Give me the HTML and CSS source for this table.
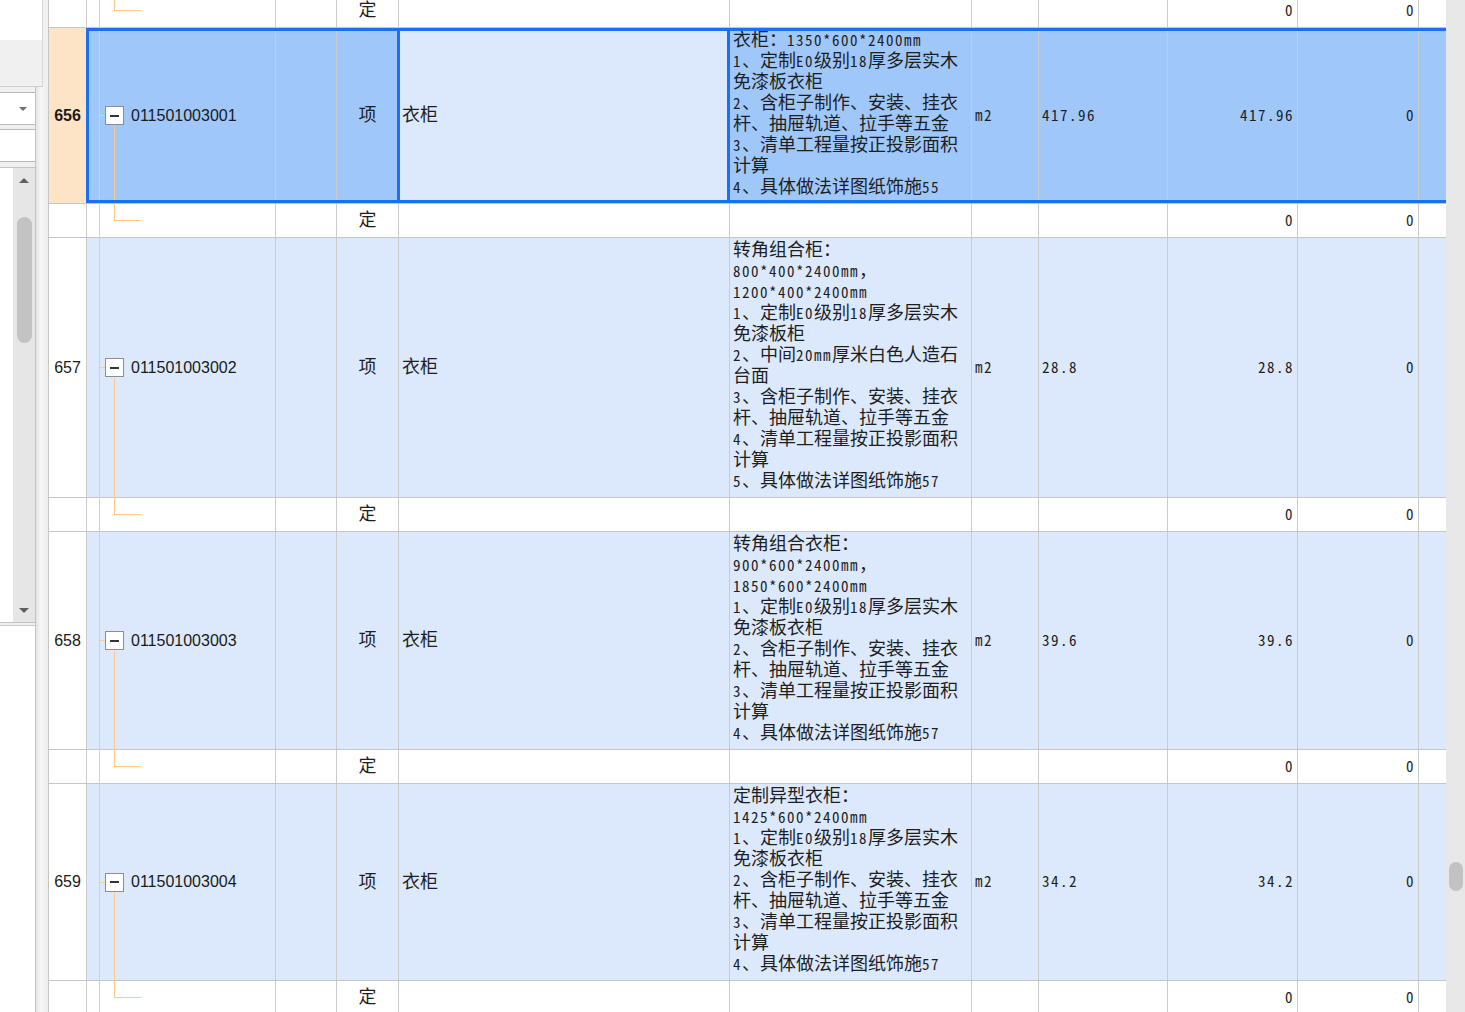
FILE: index.html
```html
<!DOCTYPE html>
<html lang="zh-CN">
<head>
<meta charset="utf-8">
<title>清单</title>
<link rel="stylesheet" href="styles.css">
</head>
<body>
<div class="app">
  <aside class="side">
    <div class="side-head"><div class="side-white"></div></div>
    <div class="side-main">
      <div class="panel">
        <div class="select"><span class="caret"></span></div>
        <div class="input"></div>
        <div class="list">
          <div class="sb">
            <span class="arr up"></span>
            <span class="sthumb"></span>
            <span class="sb-fill"></span>
            <span class="arr down"></span>
          </div>
        </div>
        <div class="rest"></div>
      </div>
      <div class="splitter"></div>
    </div>
  </aside>

  <main class="gridwrap">
    <div class="grid">
      <div class="row d">
        <div class="c num"></div><div class="c code"></div><div class="c"></div><div class="c typ">定</div><div class="c name"></div><div class="c desc"></div><div class="c unit"></div><div class="c qty"></div><div class="c r">0</div><div class="c r">0</div><div class="c"></div>
      </div>

      <div class="row m sel">
        <div class="c num">656</div>
        <div class="c code"><span class="tb"></span>011501003001</div>
        <div class="c"></div>
        <div class="c typ">项</div>
        <div class="c name">衣柜</div>
        <div class="c desc">
          <div>衣柜：<span class="a">1350*600*2400mm</span></div>
          <div><span class="a">1</span>、定制<span class="a">E0</span>级别<span class="a">18</span>厚多层实木</div>
          <div>免漆板衣柜</div>
          <div><span class="a">2</span>、含柜子制作、安装、挂衣</div>
          <div>杆、抽屉轨道、拉手等五金</div>
          <div><span class="a">3</span>、清单工程量按正投影面积</div>
          <div>计算</div>
          <div><span class="a">4</span>、具体做法详图纸饰施<span class="a">55</span></div>
        </div>
        <div class="c unit">m2</div>
        <div class="c qty">417.96</div>
        <div class="c r">417.96</div>
        <div class="c r">0</div>
        <div class="c"></div>
      </div>

      <div class="row d">
        <div class="c num"></div><div class="c code"></div><div class="c"></div><div class="c typ">定</div><div class="c name"></div><div class="c desc"></div><div class="c unit"></div><div class="c qty"></div><div class="c r">0</div><div class="c r">0</div><div class="c"></div>
      </div>

      <div class="row m">
        <div class="c num">657</div>
        <div class="c code"><span class="tb"></span>011501003002</div>
        <div class="c"></div>
        <div class="c typ">项</div>
        <div class="c name">衣柜</div>
        <div class="c desc">
          <div>转角组合柜：</div>
          <div><span class="a">800*400*2400mm</span>，</div>
          <div><span class="a">1200*400*2400mm</span></div>
          <div><span class="a">1</span>、定制<span class="a">E0</span>级别<span class="a">18</span>厚多层实木</div>
          <div>免漆板柜</div>
          <div><span class="a">2</span>、中间<span class="a">20mm</span>厚米白色人造石</div>
          <div>台面</div>
          <div><span class="a">3</span>、含柜子制作、安装、挂衣</div>
          <div>杆、抽屉轨道、拉手等五金</div>
          <div><span class="a">4</span>、清单工程量按正投影面积</div>
          <div>计算</div>
          <div><span class="a">5</span>、具体做法详图纸饰施<span class="a">57</span></div>
        </div>
        <div class="c unit">m2</div>
        <div class="c qty">28.8</div>
        <div class="c r">28.8</div>
        <div class="c r">0</div>
        <div class="c"></div>
      </div>

      <div class="row d">
        <div class="c num"></div><div class="c code"></div><div class="c"></div><div class="c typ">定</div><div class="c name"></div><div class="c desc"></div><div class="c unit"></div><div class="c qty"></div><div class="c r">0</div><div class="c r">0</div><div class="c"></div>
      </div>

      <div class="row m">
        <div class="c num">658</div>
        <div class="c code"><span class="tb"></span>011501003003</div>
        <div class="c"></div>
        <div class="c typ">项</div>
        <div class="c name">衣柜</div>
        <div class="c desc">
          <div>转角组合衣柜：</div>
          <div><span class="a">900*600*2400mm</span>，</div>
          <div><span class="a">1850*600*2400mm</span></div>
          <div><span class="a">1</span>、定制<span class="a">E0</span>级别<span class="a">18</span>厚多层实木</div>
          <div>免漆板衣柜</div>
          <div><span class="a">2</span>、含柜子制作、安装、挂衣</div>
          <div>杆、抽屉轨道、拉手等五金</div>
          <div><span class="a">3</span>、清单工程量按正投影面积</div>
          <div>计算</div>
          <div><span class="a">4</span>、具体做法详图纸饰施<span class="a">57</span></div>
        </div>
        <div class="c unit">m2</div>
        <div class="c qty">39.6</div>
        <div class="c r">39.6</div>
        <div class="c r">0</div>
        <div class="c"></div>
      </div>

      <div class="row d">
        <div class="c num"></div><div class="c code"></div><div class="c"></div><div class="c typ">定</div><div class="c name"></div><div class="c desc"></div><div class="c unit"></div><div class="c qty"></div><div class="c r">0</div><div class="c r">0</div><div class="c"></div>
      </div>

      <div class="row m">
        <div class="c num">659</div>
        <div class="c code"><span class="tb"></span>011501003004</div>
        <div class="c"></div>
        <div class="c typ">项</div>
        <div class="c name">衣柜</div>
        <div class="c desc">
          <div>定制异型衣柜：</div>
          <div><span class="a">1425*600*2400mm</span></div>
          <div><span class="a">1</span>、定制<span class="a">E0</span>级别<span class="a">18</span>厚多层实木</div>
          <div>免漆板衣柜</div>
          <div><span class="a">2</span>、含柜子制作、安装、挂衣</div>
          <div>杆、抽屉轨道、拉手等五金</div>
          <div><span class="a">3</span>、清单工程量按正投影面积</div>
          <div>计算</div>
          <div><span class="a">4</span>、具体做法详图纸饰施<span class="a">57</span></div>
        </div>
        <div class="c unit">m2</div>
        <div class="c qty">34.2</div>
        <div class="c r">34.2</div>
        <div class="c r">0</div>
        <div class="c"></div>
      </div>

      <div class="row d">
        <div class="c num"></div><div class="c code"></div><div class="c"></div><div class="c typ">定</div><div class="c name"></div><div class="c desc"></div><div class="c unit"></div><div class="c qty"></div><div class="c r">0</div><div class="c r">0</div><div class="c"></div>
      </div>
    </div>
  </main>

  <div class="vbar"><div class="vthumb"></div></div>
</div>
</body>
</html>
```

FILE: styles.css
```css
* { box-sizing: border-box; }

html, body {
  margin: 0;
  height: 100%;
}

body {
  font-family: "Noto Sans CJK SC", sans-serif;
  color: #1e1e1e;
  background: #f0f0f0;
  overflow: hidden;
}

.app {
  display: flex;
  width: 1465px;
  height: 1012px;
}

/* ---------- left side panel ---------- */
.side {
  width: 48px;
  flex: none;
  display: flex;
  flex-direction: column;
  background: #f0f0f0;
}

.side-head {
  width: 43px;
  height: 87px;
  flex: none;
  border-right: 1px solid #d9d9d9;
  border-bottom: 1px solid #cfcfcf;
}

.side-white {
  height: 40px;
  background: #fff;
}

.side-main {
  flex: 1;
  display: flex;
  min-height: 0;
}

.panel {
  width: 36px;
  flex: none;
  display: flex;
  flex-direction: column;
  padding-top: 5px;
  border-right: 1px solid #c4c4c4;
}

.select {
  height: 33px;
  flex: none;
  background: #fff;
  border-top: 1px solid #b8b8b8;
  border-bottom: 1px solid #b8b8b8;
  display: flex;
  align-items: center;
  justify-content: flex-end;
  padding-right: 8px;
}

.caret {
  width: 0;
  height: 0;
  border-left: 4px solid transparent;
  border-right: 4px solid transparent;
  border-top: 4px solid #6e6e6e;
}

.input {
  height: 33px;
  flex: none;
  margin-top: 4px;
  background: #fff;
  border-top: 1px solid #b8b8b8;
  border-bottom: 1px solid #b8b8b8;
}

.list {
  height: 456px;
  flex: none;
  margin-top: 5px;
  background: #fff;
  border-top: 1px solid #c4c4c4;
  border-bottom: 1px solid #c4c4c4;
  display: flex;
  justify-content: flex-end;
}

.sb {
  width: 22px;
  background: #e6e6e6;
  display: flex;
  flex-direction: column;
  align-items: center;
  padding: 10px 0 9px;
}

.arr {
  width: 0;
  height: 0;
  border-left: 5px solid transparent;
  border-right: 5px solid transparent;
}

.arr.up { border-bottom: 5px solid #5f5f5f; }
.arr.down { border-top: 5px solid #5f5f5f; }

.sthumb {
  width: 15px;
  height: 126px;
  margin-top: 34px;
  border-radius: 8px;
  background: #c3c3c3;
}

.sb-fill { flex: 1; }

.rest {
  flex: 1;
  margin-top: 2px;
  background: #fff;
  border-top: 1px solid #cbcbcb;
}

.splitter {
  width: 12px;
  flex: none;
  background: linear-gradient(to right, #e3e3e3, #f7f7f7 40%, #ececec);
}

/* ---------- grid ---------- */
.gridwrap {
  width: 1398px;
  flex: none;
  height: 1012px;
  overflow: hidden;
  background: #fff;
  border-left: 1px solid #c6c6c6;
}

.grid {
  margin-top: -6px;
}

.row {
  display: grid;
  grid-template-columns: 38px 189px 61px 62px 331px 242px 67px 129px 130px 121px 27px;
  border-bottom: 1px solid #c6c6c6;
  position: relative;
}

.row.d {
  height: 34px;
  background: #fff;
}

.c {
  border-right: 1px solid #cbcbcb;
  display: flex;
  align-items: center;
  min-width: 0;
  white-space: nowrap;
}

.c:last-child { border-right: none; }

.row.m .c { background: #dce9fc; }
.row.m .c.num { background: #fff; }

.row.sel .c { background: #9fc7fa; }
.row.sel .c.num { background: #fde4c6; font-weight: bold; }
.row.sel .c.name { background: #dce9fc; position: relative; }

.row.sel::after {
  content: "";
  position: absolute;
  left: 37px;
  right: -4px;
  top: 0;
  bottom: 0;
  border: 3px solid #1b6ff2;
  pointer-events: none;
}

.row.sel .c.name::after {
  content: "";
  position: absolute;
  left: -2px;
  right: -1px;
  top: 0;
  bottom: 0;
  border-left: 3px solid #1b6ff2;
  border-right: 3px solid #1b6ff2;
}

.num {
  justify-content: center;
  font-family: "Liberation Sans", Arial, sans-serif;
  font-size: 16px;
  color: #1a1a1a;
}

.code {
  position: relative;
  padding-left: 18px;
  font-family: "Liberation Sans", Arial, sans-serif;
  font-size: 16px;
  color: #1a1a1a;
}

.code::before {
  content: "";
  position: absolute;
  left: 12px;
  top: 0;
  bottom: -1px;
  width: 1px;
  background: #ffc98a;
}

.row.m .code::after {
  content: "";
  position: absolute;
  left: 27px;
  top: calc(50% + 10px);
  bottom: -1px;
  width: 1px;
  background: #ffc98a;
}

.row.d .code::after {
  content: "";
  position: absolute;
  left: 27px;
  top: 0;
  height: 16px;
  width: 26px;
  border-left: 1px solid #ffc98a;
  border-bottom: 1px solid #ffc98a;
}

.tb {
  width: 19px;
  height: 19px;
  flex: none;
  margin-right: 7px;
  border: 1px solid #8e8e8e;
  background: #fff;
  position: relative;
  display: flex;
  align-items: center;
  justify-content: center;
}

.tb::before {
  content: "";
  width: 9px;
  height: 2px;
  background: #333;
}

.tb::after {
  content: "";
  position: absolute;
  left: -7px;
  top: 8px;
  width: 6px;
  height: 1px;
  background: #ffc98a;
}

.typ, .name {
  font-family: "Liberation Sans", "Noto Sans CJK SC", sans-serif;
  font-size: 18px;
  line-height: 21px;
}

.typ {
  justify-content: center;
}

.name {
  padding-left: 3px;
}

.desc {
  display: block;
  padding: 2px 3px 5px;
  font-family: "Liberation Sans", "Noto Sans CJK SC", sans-serif;
  font-size: 18px;
  line-height: 21px;
}

.desc > div {
  height: 21px;
}

.desc .a {
  font-family: "Noto Sans Mono CJK SC", "Liberation Mono", monospace;
  font-size: 15px;
  letter-spacing: 1.5px;
  line-height: 1;
}

.unit, .qty, .r {
  font-family: "Noto Sans Mono CJK SC", "Liberation Mono", monospace;
  font-size: 15px;
  letter-spacing: 1.5px;
  padding-bottom: 3px;
}

.unit, .qty {
  padding-left: 3px;
}

.r {
  justify-content: flex-end;
  padding-right: 3px;
}

/* ---------- right scrollbar ---------- */
.vbar {
  width: 19px;
  flex: none;
  background: #e8e8e8;
  padding: 862px 2px 0 3px;
}

.vthumb {
  width: 14px;
  height: 29px;
  border-radius: 7px;
  background: #c2c2c2;
}
```
